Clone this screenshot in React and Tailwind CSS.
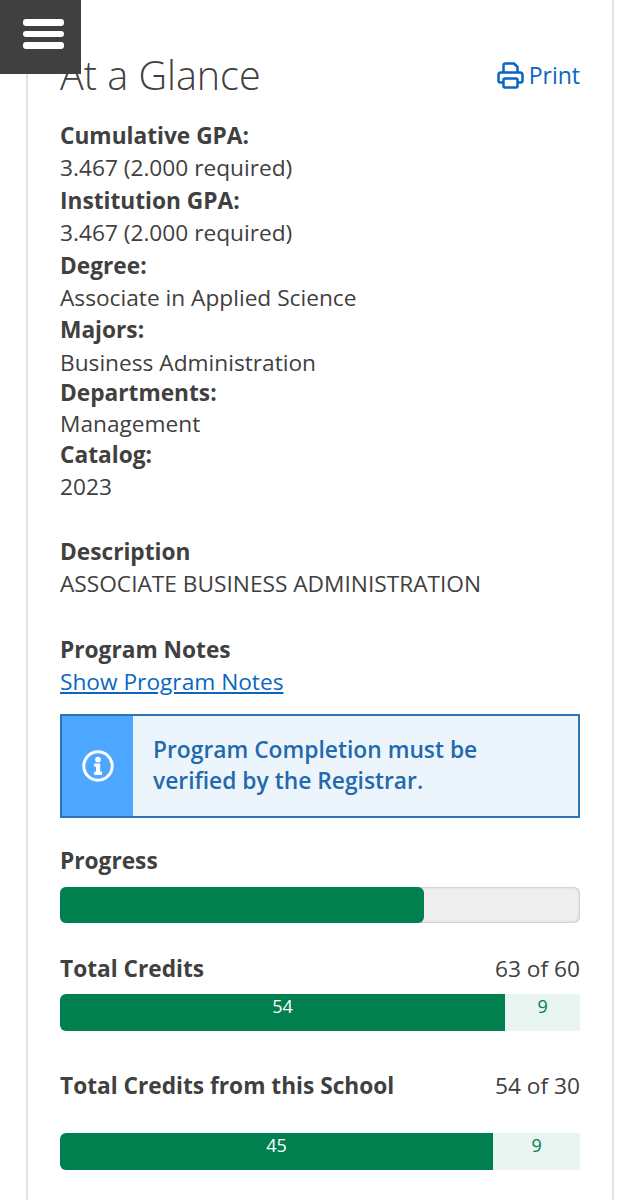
import React from 'react';

const FACTS = [
  { label: 'Cumulative GPA:', value: '3.467 (2.000 required)', cls: '' },
  { label: 'Institution GPA:', value: '3.467 (2.000 required)', cls: '' },
  { label: 'Degree:', value: 'Associate in Applied Science', cls: '' },
  { label: 'Majors:', value: 'Business Administration', cls: '' },
  { label: 'Departments:', value: 'Management', cls: '-mt-[2px] leading-[31px]' },
  { label: 'Catalog:', value: '2023', cls: 'leading-[32px]' },
];

function PrinterIcon() {
  return (
    <svg width="27" height="27" viewBox="0 0 27 27" fill="none" stroke="#0a66c2" strokeWidth="2.5" strokeLinejoin="round">
      <path d="M6.5 11V3.5a2 2 0 0 1 2-2h8.5l3.5 3.5V11" />
      <path d="M6 20.5H3.5a2 2 0 0 1-2-2V13a2.5 2.5 0 0 1 2.5-2.5h19a2.5 2.5 0 0 1 2.5 2.5v5.5a2 2 0 0 1-2 2H21" />
      <rect x="6.5" y="16.5" width="14" height="9" rx="1.5" />
    </svg>
  );
}

function InfoIcon() {
  return (
    <svg width="32" height="32" viewBox="0 0 32 32" fill="none">
      <circle cx="16" cy="16" r="14.2" stroke="#fff" strokeWidth="3" />
      <circle cx="16" cy="9.6" r="2.9" fill="#fff" />
      <path d="M12.2 13.6h6v8.2h1.8v3.1h-7.8v-3.1h1.8v-5.1h-1.8z" fill="#fff" />
    </svg>
  );
}

function CreditBar({ done, extra, pct }) {
  return (
    <div className="flex h-[37px] text-[18px] leading-[25px]">
      <div className="bg-[#01804f] text-white text-center rounded-l-md" style={{ width: `${pct}%` }}>{done}</div>
      <div className="flex-1 bg-[#e8f5f0] text-[#01804f] text-center">{extra}</div>
    </div>
  );
}

export default function App() {
  return (
    <div className="relative w-[640px] h-[1200px] overflow-hidden bg-white text-[#404040] text-[22.7px] leading-[32.4px]" style={{ fontFamily: '"Open Sans", sans-serif' }}>
      {/* Menu button sits over the card */}
      <div className="absolute left-0 top-0 w-[81px] h-[74px] bg-[#404040] flex flex-col gap-[5px] pt-[19px] pl-[23px]">
        <div className="w-[41px] h-[6.5px] rounded-[3px] bg-white" />
        <div className="w-[41px] h-[6.5px] rounded-[3px] bg-white" />
        <div className="w-[41px] h-[6.5px] rounded-[3px] bg-white" />
      </div>

      <div className="mx-[26px] h-full border-x-2 border-[#e3e3e3] px-[32px] pt-[50px]">
        <div className="flex items-center justify-between h-[50px]">
          <h1 className="text-[39.5px] leading-[50px] font-light pb-[1px]">At a Glance</h1>
          <a className="flex items-center gap-[5px] text-[#0a66c2] text-[23px]">
            <PrinterIcon />
            Print
          </a>
        </div>

        <div className="mt-[20px]">
          {FACTS.map(({ label, value, cls }) => (
            <div key={label} className={cls}>
              <div className="font-bold">{label}</div>
              <div>{value}</div>
            </div>
          ))}
        </div>

        <div className="mt-[32.5px]">
          <div className="font-bold">Description</div>
          <div className="whitespace-nowrap">ASSOCIATE BUSINESS ADMINISTRATION</div>
        </div>

        <div className="mt-[33px]">
          <div className="font-bold">Program Notes</div>
          <a className="text-[#0a66c2] underline">Show Program Notes</a>
        </div>

        <div className="mt-[15.5px] flex h-[104px] border-2 border-[#2f74b5] bg-[#edf5fc]">
          <div className="w-[71px] bg-[#4da6ff] flex items-center justify-center">
            <InfoIcon />
          </div>
          <div className="flex-1 pl-[20px] pb-[1px] flex items-center font-semibold text-[#2369ad] text-[22.8px] leading-[31px]">
            <div>Program Completion must be<br />verified by the Registrar.</div>
          </div>
        </div>

        <div className="mt-[27px] font-bold">Progress</div>
        <div className="mt-[10px] h-[36px] rounded-md bg-[#eeeeee] shadow-[inset_0_0_3px_rgba(0,0,0,0.3)]">
          <div className="h-full rounded-md bg-[#01804f]" style={{ width: '70%' }} />
        </div>

        <div className="mt-[30px] flex justify-between">
          <span className="font-bold">Total Credits</span>
          <span>63 of 60</span>
        </div>
        <div className="mt-[8px]">
          <CreditBar done="54" extra="9" pct={85.6} />
        </div>

        <div className="mt-[39px] flex justify-between">
          <span className="font-bold">Total Credits from this School</span>
          <span>54 of 30</span>
        </div>
        <div className="mt-[31px]">
          <CreditBar done="45" extra="9" pct={83.3} />
        </div>
      </div>
    </div>
  );
}
